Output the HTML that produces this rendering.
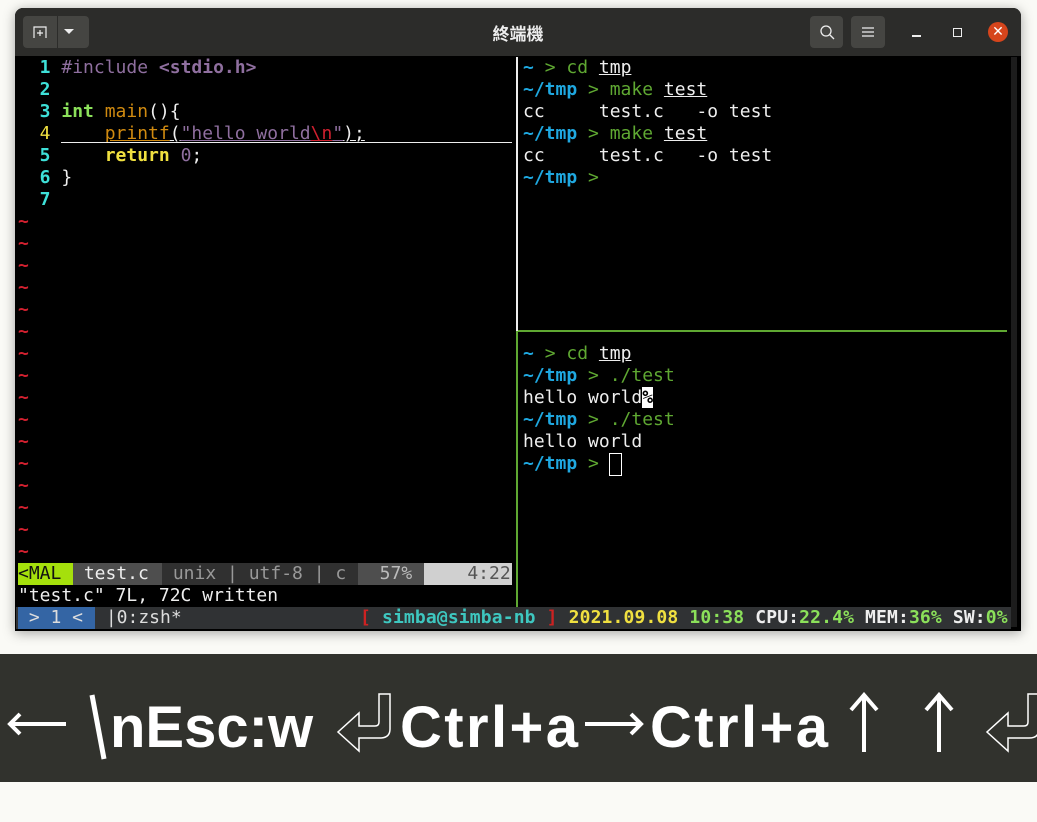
<!DOCTYPE html>
<html><head><meta charset="utf-8"><style>
*{margin:0;padding:0;box-sizing:border-box}
body{width:1037px;height:822px;background:#fafaf6;position:relative;overflow:hidden;font-family:"DejaVu Sans Mono","Liberation Mono",monospace}
#win{position:absolute;left:15px;top:8px;width:1006px;height:623px;background:#000;border-radius:8px 8px 0 0;box-shadow:0 2px 12px rgba(0,0,0,.35);overflow:hidden}
#tb{position:absolute;left:0;top:0;width:1006px;height:48px;background:#2c2c2a}
.btn{position:absolute;top:8px;height:32px;background:#454542;border-radius:4px}
#title{position:absolute;left:0;width:1006px;top:12px;text-align:center;color:#eee;font:bold 17px "Noto Sans CJK TC","Liberation Sans",sans-serif}
.r{position:absolute;height:22px;line-height:22px;font-size:18px;white-space:pre;color:#eee}
.cy{color:#3ee0d8;font-weight:bold}.yl{color:#f0e040}.pu{color:#8f6f9f}.or{color:#d08a10}.gr{color:#8be05a;font-weight:bold}
.blb{color:#1fa8e0;font-weight:bold}.g{color:#5fa832}.u{text-decoration:underline}
.tl{color:#d0202f;font-weight:bold}
#band{position:absolute;left:0;top:654px;width:1037px;height:128px;background:#31322d;overflow:hidden}
.bt{position:absolute;top:45px;color:#fff;font:bold 58px/58px "Liberation Sans",sans-serif;white-space:pre}
#band svg{position:absolute}
</style></head><body>
<div id="win">
 <div id="tb">
  <div class="btn" style="left:8px;width:66px"></div>
  <div style="position:absolute;left:42px;top:8px;width:1px;height:32px;background:#2c2c2a"></div>
  <svg style="position:absolute;left:18px;top:17px" width="14" height="14" viewBox="0 0 14 14" fill="none" stroke="#eee" stroke-width="1.2"><path d="M1 13V2h12v11M7 5v6M4 8h6"/></svg>
  <svg style="position:absolute;left:49px;top:21px" width="10" height="6"><path d="M0 0h10L5 5z" fill="#eee"/></svg>
  <div id="title">終端機</div>
  <div class="btn" style="left:795px;width:33px"></div>
  <svg style="position:absolute;left:804px;top:16px" width="16" height="16" fill="none" stroke="#eee" stroke-width="1.3"><circle cx="7" cy="7" r="5"/><path d="M11 11l4 4"/></svg>
  <div class="btn" style="left:836px;width:34px"></div>
  <svg style="position:absolute;left:847px;top:18px" width="12" height="12" stroke="#eee" stroke-width="1.2"><path d="M0 2h12M0 6h12M0 10h12"/></svg>
  <div style="position:absolute;left:897px;top:27px;width:9px;height:1.5px;background:#eee"></div>
  <div style="position:absolute;left:938px;top:20px;width:9px;height:9px;border:1.5px solid #eee"></div>
  <div style="position:absolute;left:973px;top:14px;width:20px;height:20px;border-radius:50%;background:#d6451c;color:#fff;font:bold 14px 'DejaVu Sans',sans-serif;text-align:center;line-height:20px">✕</div>
 </div>
</div>
<div style="position:absolute;left:516px;top:57px;width:2px;height:274px;background:#eee"></div>
<div style="position:absolute;left:516px;top:331px;width:2px;height:276px;background:#5fa832"></div>
<div style="position:absolute;left:518px;top:330px;width:489px;height:2px;background:#5fa832"></div>
<div style="position:absolute;left:1011px;top:57px;width:6px;height:570px;background:#1c1c1c"></div>

<div class="r" style="left:18px;top:57px"><span class="cy">  1</span> <span class="pu">#include</span> <span class="pu" style="font-weight:bold">&lt;stdio.h&gt;</span></div>
<div class="r" style="left:18px;top:79px"><span class="cy">  2</span></div>
<div class="r" style="left:18px;top:101px"><span class="cy">  3</span> <span class="gr">int</span> <span class="or">main</span>(){</div>
<div class="r" style="left:18px;top:123px"><span class="yl">  4</span>     <span class="or u">printf</span><span class="u">(</span><span class="pu u">"hello world</span><span class="u" style="color:#d0202f">\n</span><span class="pu u">"</span><span class="u">);</span></div>
<div style="position:absolute;left:61px;top:142px;width:451px;height:1px;background:#eee"></div>
<div class="r" style="left:18px;top:145px"><span class="cy">  5</span>     <span class="yl" style="font-weight:bold">return</span> <span class="pu">0</span>;</div>
<div class="r" style="left:18px;top:167px"><span class="cy">  6</span> }</div>
<div class="r" style="left:18px;top:189px"><span class="cy">  7</span></div>
<div class="r tl" style="left:18px;top:211px;line-height:22px">~<br>~<br>~<br>~<br>~<br>~<br>~<br>~<br>~<br>~<br>~<br>~<br>~<br>~<br>~<br>~</div>

<div class="r" style="left:18px;top:563px;width:55px;background:#a5e00c;color:#111">&lt;MAL</div>
<div class="r" style="left:73px;top:563px;width:89px;background:#4e4e4e;color:#eee"> test.c</div>
<div class="r" style="left:162px;top:563px;width:196px;background:#303030;color:#999"> unix | utf-8 | c</div>
<div class="r" style="left:358px;top:563px;width:66px;background:#4e4e4e;color:#bbb">  57%</div>
<div class="r" style="left:424px;top:563px;width:88px;background:#d0d0d0;color:#555">    4:22</div>
<div class="r" style="left:18px;top:585px">"test.c" 7L, 72C written</div>

<div style="position:absolute;left:16px;top:607px;width:995px;height:22px;background:#303234"></div>
<div class="r" style="left:18px;top:607px;width:77px;background:#3465a4;color:#ddd"> &gt; 1 &lt;</div>
<div class="r" style="left:95px;top:607px;color:#ddd"> |0:zsh*</div>
<div class="r" style="left:360px;top:607px;font-weight:bold;letter-spacing:0.14px"><span style="color:#c22">[</span> <span style="color:#3ec7c0">simba@simba-nb</span> <span style="color:#c22">]</span> <span style="color:#f0e040">2021.09.08</span> <span style="color:#8be05a">10:38</span> CPU:<span style="color:#8be05a">22.4%</span> MEM:<span style="color:#8be05a">36%</span> SW:<span style="color:#8be05a">0%</span></div>

<div class="r" style="left:523px;top:57px"><span class="blb">~</span> <span class="g">&gt; cd</span> <span class="u">tmp</span></div>
<div class="r" style="left:523px;top:79px"><span class="blb">~/tmp</span> <span class="g">&gt; make</span> <span class="u">test</span></div>
<div class="r" style="left:523px;top:101px">cc     test.c   -o test</div>
<div class="r" style="left:523px;top:123px"><span class="blb">~/tmp</span> <span class="g">&gt; make</span> <span class="u">test</span></div>
<div class="r" style="left:523px;top:145px">cc     test.c   -o test</div>
<div class="r" style="left:523px;top:167px"><span class="blb">~/tmp</span> <span class="g">&gt;</span></div>

<div class="r" style="left:523px;top:343px"><span class="blb">~</span> <span class="g">&gt; cd</span> <span class="u">tmp</span></div>
<div class="r" style="left:523px;top:365px"><span class="blb">~/tmp</span> <span class="g">&gt; ./test</span></div>
<div class="r" style="left:523px;top:387px">hello world<span style="background:#fff;color:#000;font-weight:bold">%</span></div>
<div class="r" style="left:523px;top:409px"><span class="blb">~/tmp</span> <span class="g">&gt; ./test</span></div>
<div class="r" style="left:523px;top:431px">hello world</div>
<div class="r" style="left:523px;top:453px"><span class="blb">~/tmp</span> <span class="g">&gt;</span> </div>
<div style="position:absolute;left:609px;top:453px;width:13px;height:23px;border:1.5px solid #fff"></div>

<div id="band">
 <svg style="left:6px;top:58px" width="62" height="24" fill="none" stroke="#fff" stroke-width="4"><path d="M4 12h56M14 2L4 12l10 10"/></svg>
 <svg style="left:88px;top:40px" width="20" height="66" stroke="#fff" stroke-width="5"><path d="M4 1l12 64"/></svg>
 <div class="bt" style="left:110px">nEsc:w</div>
 <svg style="left:336px;top:39px" width="56" height="60" fill="none" stroke="#fff" stroke-width="1.5"><path d="M43 1h11v35q0 9-10 9H23v13L2 39l21-19v13h16q4 0 4-4Z"/></svg>
 <div class="bt" style="left:400px;letter-spacing:2.4px">Ctrl+a</div>
 <svg style="left:583px;top:58px" width="62" height="24" fill="none" stroke="#fff" stroke-width="4"><path d="M2 12h56M48 2l10 10-10 10"/></svg>
 <div class="bt" style="left:650px;letter-spacing:2.4px">Ctrl+a</div>
 <svg style="left:848px;top:38px" width="32" height="60" fill="none" stroke="#fff" stroke-width="4"><path d="M16 3v57M3 18L16 3l13 15"/></svg>
 <svg style="left:923px;top:38px" width="32" height="60" fill="none" stroke="#fff" stroke-width="4"><path d="M16 3v57M3 18L16 3l13 15"/></svg>
 <svg style="left:985px;top:39px" width="56" height="60" fill="none" stroke="#fff" stroke-width="1.5"><path d="M43 1h11v35q0 9-10 9H23v13L2 39l21-19v13h16q4 0 4-4Z"/></svg>
</div>
</body></html>
